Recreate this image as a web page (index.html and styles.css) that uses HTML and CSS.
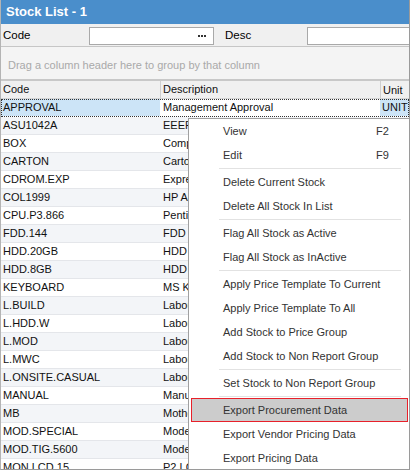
FILE: index.html
```html
<!DOCTYPE html>
<html>
<head>
<meta charset="utf-8">
<link rel="stylesheet" href="styles.css">
</head>
<body>
<div class="window">
  <div class="titlebar">Stock List - 1</div>
  <div class="filter">
    <span class="flabel code-label">Code</span>
    <div class="finput code-input"><span class="dots"><i></i><i></i><i></i></span></div>
    <span class="flabel desc-label">Desc</span>
    <div class="finput desc-input"></div>
  </div>
  <div class="grouppanel">Drag a column header here to group by that column</div>
  <div class="grid">
    <div class="hrow">
      <div class="c1">Code</div><div class="c2">Description</div><div class="c3">Unit</div>
    </div>
    <div class="row selected"><div class="c1">APPROVAL</div><div class="c2">Management Approval</div><div class="c3 unitsel">UNIT</div></div>
    <div class="row alt"><div class="c1">ASU1042A</div><div class="c2">EEEPC 1042A</div><div class="c3"></div></div>
    <div class="row"><div class="c1">BOX</div><div class="c2">Computer Box</div><div class="c3"></div></div>
    <div class="row alt"><div class="c1">CARTON</div><div class="c2">Carton</div><div class="c3"></div></div>
    <div class="row"><div class="c1">CDROM.EXP</div><div class="c2">Express CD-ROM</div><div class="c3"></div></div>
    <div class="row alt"><div class="c1">COL1999</div><div class="c2">HP All in One</div><div class="c3"></div></div>
    <div class="row"><div class="c1">CPU.P3.866</div><div class="c2">Pentium III 866</div><div class="c3"></div></div>
    <div class="row alt"><div class="c1">FDD.144</div><div class="c2">FDD 1.44MB</div><div class="c3"></div></div>
    <div class="row"><div class="c1">HDD.20GB</div><div class="c2">HDD IDE 20GB</div><div class="c3"></div></div>
    <div class="row alt"><div class="c1">HDD.8GB</div><div class="c2">HDD IDE 8GB</div><div class="c3"></div></div>
    <div class="row"><div class="c1">KEYBOARD</div><div class="c2">MS Keyboard</div><div class="c3"></div></div>
    <div class="row alt"><div class="c1">L.BUILD</div><div class="c2">Labour - Build</div><div class="c3"></div></div>
    <div class="row"><div class="c1">L.HDD.W</div><div class="c2">Labour - HDD Wipe</div><div class="c3"></div></div>
    <div class="row alt"><div class="c1">L.MOD</div><div class="c2">Labour - Modification</div><div class="c3"></div></div>
    <div class="row"><div class="c1">L.MWC</div><div class="c2">Labour - MWC</div><div class="c3"></div></div>
    <div class="row alt"><div class="c1">L.ONSITE.CASUAL</div><div class="c2">Labour - Onsite Casual</div><div class="c3"></div></div>
    <div class="row"><div class="c1">MANUAL</div><div class="c2">Manual</div><div class="c3"></div></div>
    <div class="row alt"><div class="c1">MB</div><div class="c2">Motherboard</div><div class="c3"></div></div>
    <div class="row"><div class="c1">MOD.SPECIAL</div><div class="c2">Modem Special</div><div class="c3"></div></div>
    <div class="row alt"><div class="c1">MOD.TIG.5600</div><div class="c2">Modem TIG 5600</div><div class="c3"></div></div>
    <div class="row"><div class="c1">MON.LCD.15</div><div class="c2">P2 LCD 15</div><div class="c3"></div></div>
  </div>
  <div class="menu">
    <div class="item"><span class="lbl">View</span><span class="key">F2</span></div>
    <div class="item"><span class="lbl">Edit</span><span class="key">F9</span></div>
    <div class="sep"></div>
    <div class="item"><span class="lbl">Delete Current Stock</span></div>
    <div class="item"><span class="lbl">Delete All Stock In List</span></div>
    <div class="sep"></div>
    <div class="item"><span class="lbl">Flag All Stock as Active</span></div>
    <div class="item"><span class="lbl">Flag All Stock as InActive</span></div>
    <div class="sep"></div>
    <div class="item"><span class="lbl">Apply Price Template To Current</span></div>
    <div class="item"><span class="lbl">Apply Price Template To All</span></div>
    <div class="item"><span class="lbl">Add Stock to Price Group</span></div>
    <div class="item"><span class="lbl">Add Stock to Non Report Group</span></div>
    <div class="sep"></div>
    <div class="item"><span class="lbl">Set Stock to Non Report Group</span></div>
    <div class="sep"></div>
    <div class="item hot"><span class="lbl">Export Procurement Data</span></div>
    <div class="item"><span class="lbl">Export Vendor Pricing Data</span></div>
    <div class="item"><span class="lbl">Export Pricing Data</span></div>
  </div>
</div>
</body>
</html>
```

FILE: styles.css
```css
html, body {
  margin: 0;
  padding: 0;
  background: #ffffff;
  overflow: hidden;
}
body {
  font-family: "Liberation Sans", Arial, sans-serif;
  font-size: 11px;
  color: #111111;
  width: 411px;
  height: 471px;
}
.window {
  position: relative;
  box-sizing: border-box;
  width: 410px;
  height: 470px;
  border-right: 1px solid #9a9a9a;
  border-bottom: 1px solid #9a9a9a;
  border-left: 1px solid #b4b4b4;
  overflow: hidden;
  background: #ffffff;
}
.titlebar {
  height: 24px;
  line-height: 24px;
  background: #4a8ecb;
  color: #ffffff;
  font-weight: bold;
  font-size: 13px;
  padding-left: 6px;
  margin-left: -1px;
}
.filter {
  height: 23px;
  box-sizing: border-box;
  background: #f0f0f0;
  border-bottom: 1px solid #c6c6c6;
  display: flex;
  align-items: center;
  font-size: 11.5px;
  color: #000;
}
.flabel { display: block; flex: none; }
.code-label { margin-left: 2px; width: 86px; }
.desc-label { margin-left: 11px; width: 82px; }
.finput {
  box-sizing: border-box;
  height: 18px;
  background: #ffffff;
  border: 1px solid #a9a9a9;
  margin-top: 1px;
  flex: none;
}
.code-input {
  width: 125px;
  display: flex;
  justify-content: flex-end;
  align-items: center;
}
.dots {
  display: flex;
  gap: 1px;
  margin-right: 7px;
}
.dots i {
  display: block;
  width: 2px;
  height: 2px;
  background: #333;
}
.desc-input { width: 120px; }
.grouppanel {
  height: 34px;
  box-sizing: border-box;
  background: #f4f4f4;
  border-bottom: 2px solid #c8c8c8;
  color: #a9a9a9;
  font-size: 11px;
  padding-left: 7px;
  display: flex;
  align-items: center;
  padding-top: 4px;
}
.grid { display: flex; flex-direction: column; }
.hrow, .row {
  display: flex;
  box-sizing: border-box;
}
.hrow {
  height: 18px;
  background: #f0f0f0;
  border-bottom: 1px solid #d4d4d4;
  align-items: center;
}
.hrow .c1, .hrow .c2 { border-right: 1px solid #cfcfcf; height: 17px; line-height: 17px; }
.c1 { width: 159px; padding-left: 2px; box-sizing: border-box; white-space: nowrap; flex: none; }
.c2 { width: 220px; padding-left: 2px; box-sizing: border-box; white-space: nowrap; overflow: hidden; flex: none; }
.c3 { width: 32px; padding-left: 2px; box-sizing: border-box; white-space: nowrap; flex: none; }
.hrow .c1 { width: 160px; }
.hrow .c2 { width: 220px; padding-left: 2px; }
.row {
  height: 18px;
  line-height: 17px;
  border-bottom: 1px solid #e4e6ea;
  background: #ffffff;
}
.row .c2 { padding-left: 3px; }
.row.alt { background: #f3f5f8; }
.row.selected {
  background: #ffffff;
  outline: 1px dotted #333;
  outline-offset: -1px;
  border-bottom: 1px dotted #555;
}
.row.selected .c1 { background: #cce4f7; }
.row.selected .c3 { background: #cce4f7; }
.menu {
  position: absolute;
  left: 187px;
  top: 118px;
  width: 224px;
  box-sizing: border-box;
  background: #ffffff;
  border: 1px solid #a0a0a0;
  color: #333333;
  font-size: 11px;
  padding-bottom: 1px;
}
.item {
  height: 24px;
  box-sizing: border-box;
  display: flex;
  align-items: center;
  padding-left: 34px;
}
.lbl { width: 153px; white-space: nowrap; }
.key { white-space: nowrap; }
.sep {
  height: 3px;
  display: flex;
  align-items: center;
  padding-left: 30px;
  padding-right: 10px;
}
.sep::before {
  content: "";
  display: block;
  flex: 1;
  height: 1px;
  background: #e2e2e2;
}
.item.hot {
  margin-left: 2px;
  margin-right: 3px;
  padding-left: 31px;
  background: #cccccc;
  border: 1px solid #e8202a;
}
```
